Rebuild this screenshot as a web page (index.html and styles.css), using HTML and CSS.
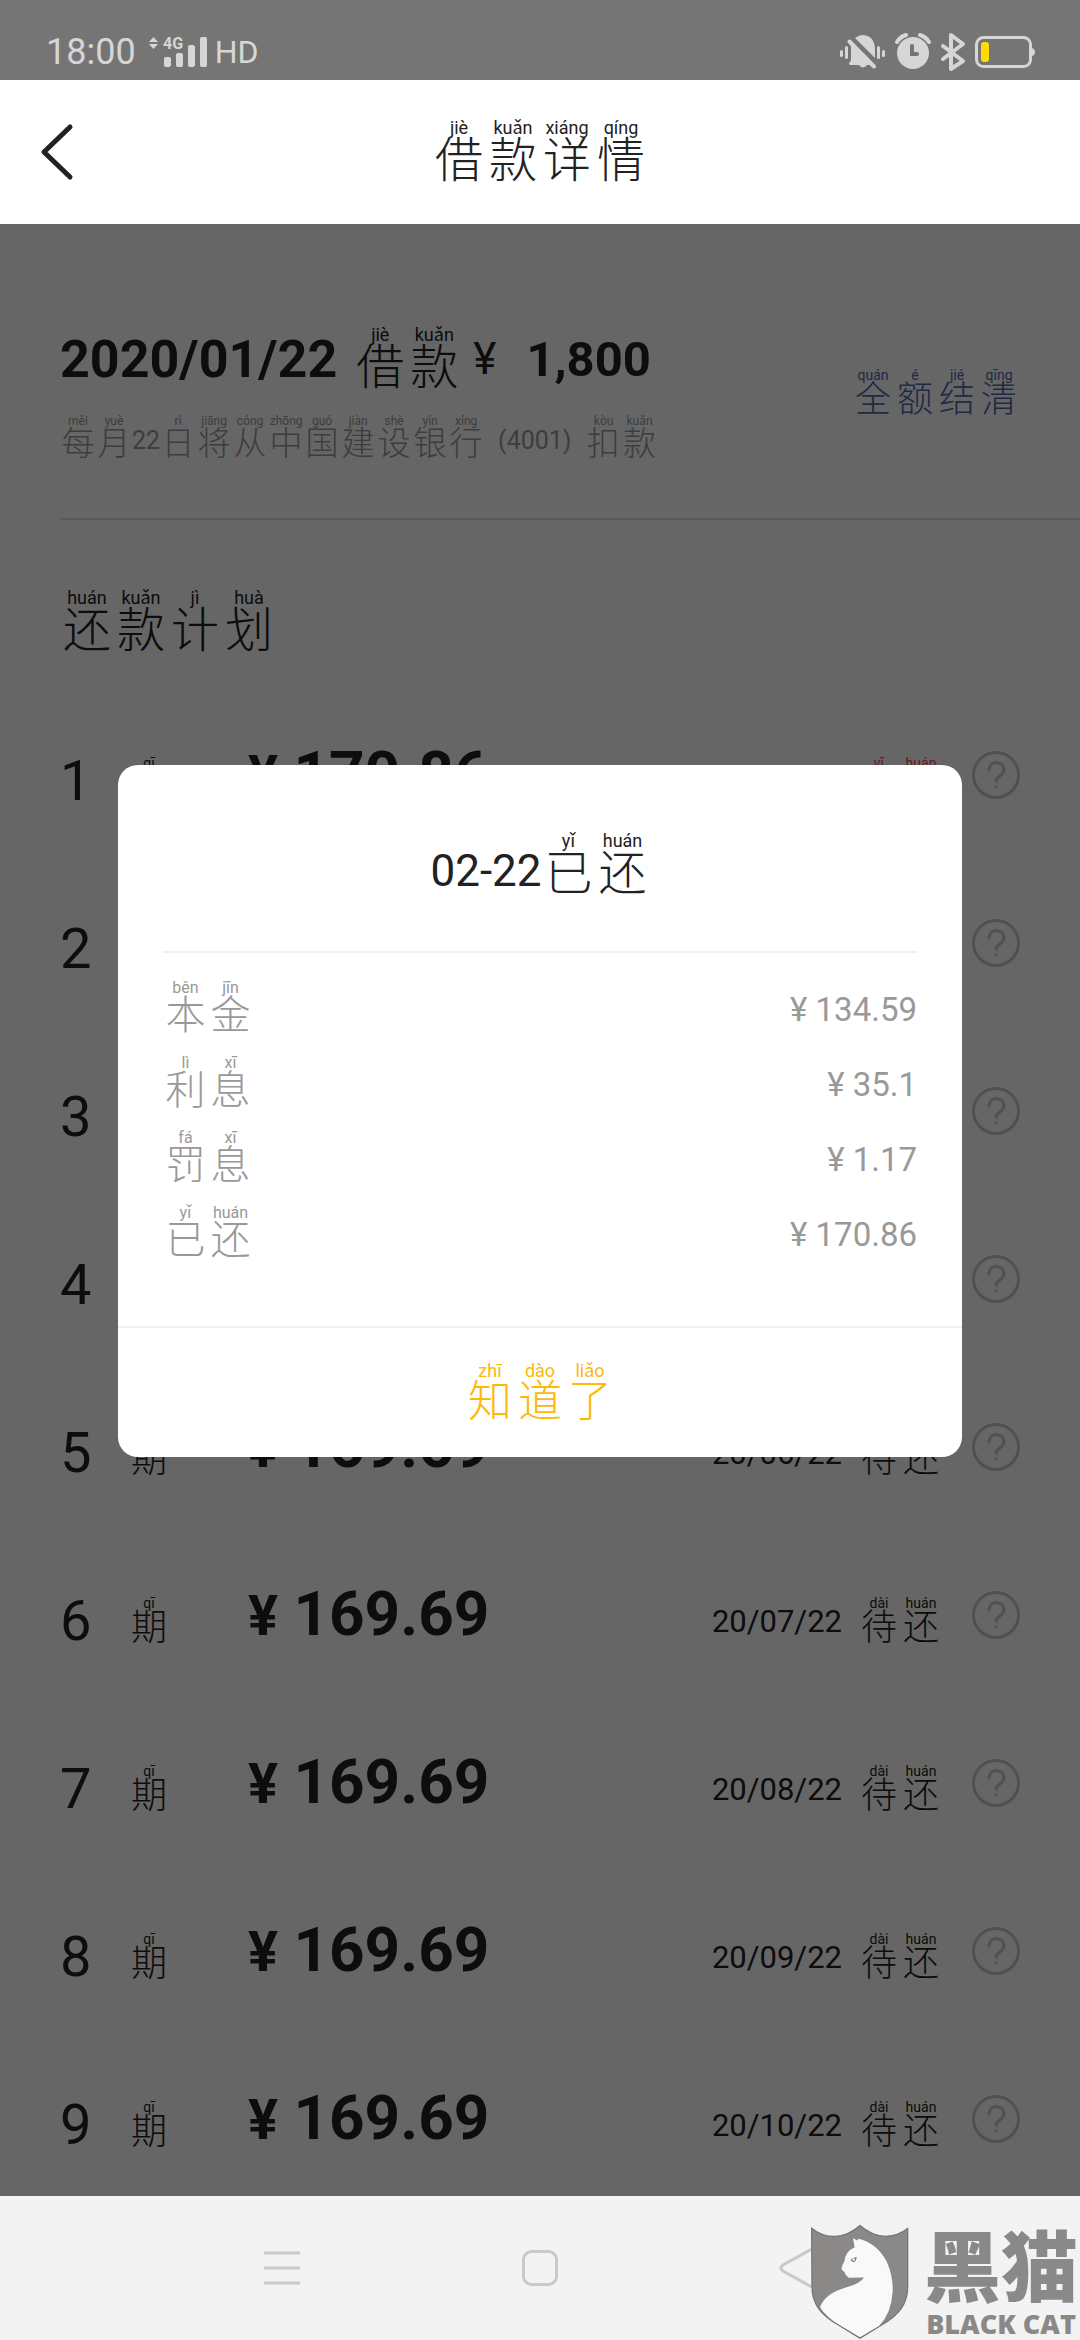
FILE: index.html
```html
<!DOCTYPE html>
<html lang="zh-CN">
<head>
    <meta charset="UTF-8">
    <meta name="viewport" content="width=device-width, initial-scale=1.0">
    <title>借款详情</title>
    <link rel="stylesheet" href="styles.css">
</head>
<body>
    <div class="status-bar">
        <div class="status-left">
            <span class="clock">18:00</span>
            <svg class="signal" width="60" height="32" viewBox="149 36 60 32">
                <path d="M149 42l4.500-5 4.500 5zM149 44h9l-4.500 5z"/>
                <text x="163" y="49">4G</text>
                <rect x="164" y="57" width="7" height="10" rx="2"/>
                <rect x="176" y="53" width="7" height="14" rx="2"/>
                <rect x="188" y="45" width="7" height="22" rx="2"/>
                <rect x="200" y="37" width="7" height="30" rx="2"/>
            </svg>
            <span class="hd">HD</span>
        </div>
        <div class="status-right">
            <svg width="46" height="38" viewBox="837 33 46 38">
                <path d="M852 38q4-3 8-3 12 1 12 15v8zM848 43l20 21q0 1-1 1h-3a4.500 4.500 0 0 1-8 0h-9q-2-1 0-3l1-2z"/>
                <path class="line" d="M846.500 41.500l24.500 25"/>
                <rect x="837" y="50" width="3" height="7" rx="1.500"/>
                <rect x="842" y="46" width="3" height="13" rx="1.500"/>
                <rect x="874" y="46" width="3" height="13" rx="1.500"/>
                <rect x="879" y="50" width="3" height="7" rx="1.500"/>
            </svg>
            <svg width="38" height="38" viewBox="894 33 38 38">
                <circle cx="913" cy="53" r="16"/>
                <path class="line" d="M897 42q3-5 9-7M929 42q-3-5-9-7"/>
                <path class="hands" d="M912 46v8h5"/>
            </svg>
            <svg width="26" height="40" viewBox="942 32 26 40">
                <path class="line" d="M945 46l20 15-12 8V35l12 9-20 15"/>
            </svg>
            <svg width="61" height="34" viewBox="974 35 61 34">
                <rect class="cell" x="976.500" y="37.500" width="54" height="29" rx="7"/>
                <path d="M1032 48q3 1 3 4t-3 4z"/>
                <rect class="charge" x="981" y="42" width="8" height="20" rx="3"/>
            </svg>
        </div>
    </div>

    <header class="top-bar">
        <button class="back" type="button" aria-label="返回">
            <svg width="34" height="58" viewBox="0 0 34 58"><path d="M30 4L4 29l26 25"/></svg>
        </button>
        <h1 class="zh-lg"><ruby>借<rt>jiè</rt></ruby><ruby>款<rt>kuǎn</rt></ruby><ruby>详<rt>xiáng</rt></ruby><ruby>情<rt>qíng</rt></ruby></h1>
    </header>

    <main>
        <section class="summary">
            <div class="summary-text">
                <h2>
                    <span class="date">2020/01/22</span>
                    <span class="zh-lg"><ruby>借<rt>jiè</rt></ruby><ruby>款<rt>kuǎn</rt></ruby></span>
                    <span class="yen">¥</span>
                    <span class="total">1,800</span>
                </h2>
                <p class="zh-xs">
                    <ruby>每<rt>měi</rt></ruby><ruby>月<rt>yuè</rt></ruby><span class="num">22</span><ruby>日<rt>rì</rt></ruby><ruby>将<rt>jiāng</rt></ruby><ruby>从<rt>cóng</rt></ruby><ruby>中<rt>zhōng</rt></ruby><ruby>国<rt>guó</rt></ruby><ruby>建<rt>jiàn</rt></ruby><ruby>设<rt>shè</rt></ruby><ruby>银<rt>yín</rt></ruby><ruby>行<rt>xíng</rt></ruby><span class="num account">(4001)</span><ruby>扣<rt>kòu</rt></ruby><ruby>款<rt>kuǎn</rt></ruby>
                </p>
            </div>
            <a class="settle zh-sm" href="#"><ruby>全<rt>quán</rt></ruby><ruby>额<rt>é</rt></ruby><ruby>结<rt>jié</rt></ruby><ruby>清<rt>qīng</rt></ruby></a>
        </section>

        <h2 class="plan-title zh-lg"><ruby>还<rt>huán</rt></ruby><ruby>款<rt>kuǎn</rt></ruby><ruby>计<rt>jì</rt></ruby><ruby>划<rt>huà</rt></ruby></h2>

        <ol class="plan">
            <li>
                <span class="no">1</span>
                <span class="zh-sm"><ruby>期<rt>qī</rt></ruby></span>
                <span class="amount"><small>¥</small> 170.86</span>
                <span class="due paid zh-sm">20/02/22 <span><ruby>已<rt>yǐ</rt></ruby><ruby>还<rt>huán</rt></ruby></span></span>
                <button class="help" type="button" aria-label="说明"><svg viewBox="0 0 48 48"><use href="#help"/></svg></button>
            </li>
            <li>
                <span class="no">2</span>
                <span class="zh-sm"><ruby>期<rt>qī</rt></ruby></span>
                <span class="amount"><small>¥</small> 169.69</span>
                <span class="due zh-sm">20/03/22 <span><ruby>待<rt>dài</rt></ruby><ruby>还<rt>huán</rt></ruby></span></span>
                <button class="help" type="button" aria-label="说明"><svg viewBox="0 0 48 48"><use href="#help"/></svg></button>
            </li>
            <li>
                <span class="no">3</span>
                <span class="zh-sm"><ruby>期<rt>qī</rt></ruby></span>
                <span class="amount"><small>¥</small> 169.69</span>
                <span class="due zh-sm">20/04/22 <span><ruby>待<rt>dài</rt></ruby><ruby>还<rt>huán</rt></ruby></span></span>
                <button class="help" type="button" aria-label="说明"><svg viewBox="0 0 48 48"><use href="#help"/></svg></button>
            </li>
            <li>
                <span class="no">4</span>
                <span class="zh-sm"><ruby>期<rt>qī</rt></ruby></span>
                <span class="amount"><small>¥</small> 169.69</span>
                <span class="due zh-sm">20/05/22 <span><ruby>待<rt>dài</rt></ruby><ruby>还<rt>huán</rt></ruby></span></span>
                <button class="help" type="button" aria-label="说明"><svg viewBox="0 0 48 48"><use href="#help"/></svg></button>
            </li>
            <li>
                <span class="no">5</span>
                <span class="zh-sm"><ruby>期<rt>qī</rt></ruby></span>
                <span class="amount"><small>¥</small> 169.69</span>
                <span class="due zh-sm">20/06/22 <span><ruby>待<rt>dài</rt></ruby><ruby>还<rt>huán</rt></ruby></span></span>
                <button class="help" type="button" aria-label="说明"><svg viewBox="0 0 48 48"><use href="#help"/></svg></button>
            </li>
            <li>
                <span class="no">6</span>
                <span class="zh-sm"><ruby>期<rt>qī</rt></ruby></span>
                <span class="amount"><small>¥</small> 169.69</span>
                <span class="due zh-sm">20/07/22 <span><ruby>待<rt>dài</rt></ruby><ruby>还<rt>huán</rt></ruby></span></span>
                <button class="help" type="button" aria-label="说明"><svg viewBox="0 0 48 48"><use href="#help"/></svg></button>
            </li>
            <li>
                <span class="no">7</span>
                <span class="zh-sm"><ruby>期<rt>qī</rt></ruby></span>
                <span class="amount"><small>¥</small> 169.69</span>
                <span class="due zh-sm">20/08/22 <span><ruby>待<rt>dài</rt></ruby><ruby>还<rt>huán</rt></ruby></span></span>
                <button class="help" type="button" aria-label="说明"><svg viewBox="0 0 48 48"><use href="#help"/></svg></button>
            </li>
            <li>
                <span class="no">8</span>
                <span class="zh-sm"><ruby>期<rt>qī</rt></ruby></span>
                <span class="amount"><small>¥</small> 169.69</span>
                <span class="due zh-sm">20/09/22 <span><ruby>待<rt>dài</rt></ruby><ruby>还<rt>huán</rt></ruby></span></span>
                <button class="help" type="button" aria-label="说明"><svg viewBox="0 0 48 48"><use href="#help"/></svg></button>
            </li>
            <li>
                <span class="no">9</span>
                <span class="zh-sm"><ruby>期<rt>qī</rt></ruby></span>
                <span class="amount"><small>¥</small> 169.69</span>
                <span class="due zh-sm">20/10/22 <span><ruby>待<rt>dài</rt></ruby><ruby>还<rt>huán</rt></ruby></span></span>
                <button class="help" type="button" aria-label="说明"><svg viewBox="0 0 48 48"><use href="#help"/></svg></button>
            </li>
        </ol>

        <div class="overlay">
            <div class="modal" role="dialog" aria-modal="true">
                <h3 class="zh-lg"><span class="day">02-22</span><ruby>已<rt>yǐ</rt></ruby><ruby>还<rt>huán</rt></ruby></h3>
                <dl class="zh-md">
                    <div><dt><ruby>本<rt>běn</rt></ruby><ruby>金<rt>jīn</rt></ruby></dt><dd>¥ 134.59</dd></div>
                    <div><dt><ruby>利<rt>lì</rt></ruby><ruby>息<rt>xī</rt></ruby></dt><dd>¥ 35.1</dd></div>
                    <div><dt><ruby>罚<rt>fá</rt></ruby><ruby>息<rt>xī</rt></ruby></dt><dd>¥ 1.17</dd></div>
                    <div><dt><ruby>已<rt>yǐ</rt></ruby><ruby>还<rt>huán</rt></ruby></dt><dd>¥ 170.86</dd></div>
                </dl>
                <button class="confirm" type="button"><ruby>知<rt>zhī</rt></ruby><ruby>道<rt>dào</rt></ruby><ruby>了<rt>liǎo</rt></ruby></button>
            </div>
        </div>
    </main>

    <nav class="nav-bar">
        <button type="button" aria-label="菜单"><svg width="40" height="40" viewBox="0 0 40 40"><path d="M2 5h36M2 20h36M2 35h36"/></svg></button>
        <button type="button" aria-label="主页"><svg width="40" height="40" viewBox="0 0 40 40"><rect x="3.500" y="3.500" width="33" height="33" rx="8"/></svg></button>
        <button type="button" aria-label="返回"><svg width="40" height="40" viewBox="0 0 40 40"><path d="M32 2L5 17q-4 3 0 6l27 15q4 1 5-3V5q-1-4-5-3z"/></svg></button>
        <div class="watermark">
            <svg width="100" height="117" viewBox="90 130 300 350">
                <path class="shield" d="M95 145Q125 170 165 170Q205 168 240 137Q275 168 317 170Q355 168 383 146V320C383 370 360 405 300 438L240 475L180 438C120 405 96 370 96 320Z"/>
                <path class="cat" d="M219 175L232 182L236 177Q290 190 320 245Q340 290 338 335Q334 400 298 438L240 472L180 436Q140 414 120 382Q135 340 200 322Q240 312 252 293L207 294Q195 285 194 277L184 268Q186 255 193 245Q195 215 224 202Z"/>
                <path class="eye" d="M212 240q6-9 18-8-1 12-9 15-7-1-9-7z"/>
                <circle class="cat" cx="221" cy="239" r="4"/>
            </svg>
            <div class="brand"><b>黑猫</b><span>BLACK CAT</span></div>
        </div>
    </nav>

    <svg class="sprite">
        <symbol id="help" viewBox="0 0 48 48">
            <circle cx="24" cy="24" r="22.500"/>
            <path d="M17 19c0-10 15-10 15 0 0 5-8 7-8 11M24 36v.1"/>
        </symbol>
    </svg>
</body>
</html>
```
FILE: styles.css
```css
* {
    box-sizing: border-box;
}
body {
    margin: 0;
    height: 100vh;
    display: flex;
    flex-direction: column;
    overflow: hidden;
    background: #fff;
    color: #222;
    font-family: Roboto, "Noto Sans CJK SC", sans-serif;
}
h1, h2, h3, p, ol, dl, dd {
    margin: 0;
    padding: 0;
    font-weight: 400;
}
button {
    padding: 0;
    border: 0;
    background: none;
    font-family: inherit;
}
svg {
    display: block;
}
.sprite {
    position: absolute;
    width: 0;
    height: 0;
}

/* characters with pinyin on top */
ruby {
    display: inline-flex;
    flex-direction: column-reverse;
    align-items: center;
    width: var(--cell);
    line-height: 1;
    font-weight: 300;
}
rt {
    display: block;
    font-size: var(--pinyin);
    line-height: 1;
    white-space: nowrap;
    font-weight: 400;
}
.zh-lg { --cell: 54px; --pinyin: 18px; font-size: 48px; }
.zh-md { --cell: 45px; --pinyin: 16px; font-size: 40px; }
.zh-sm { --cell: 42px; --pinyin: 14px; font-size: 36px; }
.zh-xs { --cell: 36px; --pinyin: 12px; font-size: 33px; }

.status-bar {
    display: flex;
    justify-content: space-between;
    align-items: center;
    height: 80px;
    padding: 24px 45px 0 46px;
    background: #757575;
    color: #d6d6d6;
}
.status-left, .status-right {
    display: flex;
    align-items: center;
}
.status-right {
    gap: 8px;
}
.clock {
    font-size: 36px;
}
.signal {
    margin: 0 6px 0 13px;
    overflow: visible;
}
.signal text {
    font-size: 16px;
    font-weight: 700;
}
.hd {
    font-size: 32px;
}
.status-bar svg {
    fill: #d6d6d6;
}
.status-bar .line {
    fill: none;
    stroke: #d6d6d6;
    stroke-width: 4;
    stroke-linecap: round;
    stroke-linejoin: round;
}
.status-bar .hands {
    fill: none;
    stroke: #757575;
    stroke-width: 4;
    stroke-linecap: round;
}
.status-bar .cell {
    fill: none;
    stroke: #d6d6d6;
    stroke-width: 3;
}
.status-bar .charge {
    fill: #ffdc00;
}

.top-bar {
    display: grid;
    grid-template-columns: 1fr auto 1fr;
    align-items: center;
    height: 144px;
    padding: 0 40px;
}
.top-bar h1, .plan-title {
    display: flex;
}
.back {
    justify-self: start;
}
.back path {
    fill: none;
    stroke: #222;
    stroke-width: 5;
    stroke-linecap: round;
    stroke-linejoin: round;
}

main {
    position: relative;
    flex: 1;
    min-height: 0;
    overflow: hidden;
}
.summary {
    display: flex;
    justify-content: space-between;
    align-items: center;
    margin-left: 60px;
    padding: 102px 60px 58px 0;
    border-bottom: 2px solid #e1e1eb;
}
.summary h2 {
    display: flex;
    align-items: center;
    height: 66px;
}
.summary h2 > * {
    display: flex;
}
.date {
    margin-right: 16px;
    font-size: 52px;
    font-weight: 700;
}
.yen {
    margin: 0 30px 0 12px;
    font-size: 44px;
}
.total {
    font-size: 49px;
    font-weight: 700;
}
.summary p {
    display: flex;
    align-items: center;
    margin-top: 23px;
    color: #999;
}
.num {
    padding-top: 6px;
    font-size: 25px;
}
.account {
    margin: 0 14px;
}
.settle {
    display: flex;
    color: #4e69aa;
    text-decoration: none;
}
.plan-title {
    padding: 69px 60px 36px;
}

.plan {
    list-style: none;
}
.plan li {
    display: grid;
    grid-template-columns: 68px 120px 1fr auto 78px;
    align-items: center;
    height: 168px;
    padding: 12px 60px 0;
}
.plan li > .zh-sm {
    display: flex;
}
.no {
    font-size: 56px;
}
.amount {
    margin-bottom: 16px;
    font-size: 62px;
    font-weight: 700;
}
.amount small {
    font-size: 56px;
}
.plan .due {
    align-items: center;
    gap: 16px;
    font-size: 31px;
}
.due span {
    display: flex;
    font-size: 36px;
}
.paid {
    color: #ff4444;
}
.help {
    justify-self: end;
    width: 48px;
    height: 48px;
    margin-bottom: 12px;
    fill: none;
    stroke: #c8c8c8;
    stroke-width: 3;
    stroke-linecap: round;
}

.overlay {
    position: absolute;
    inset: 0;
    display: flex;
    align-items: center;
    padding: 0 118px 198px;
    background: rgba(0, 0, 0, 0.6);
}
.modal {
    flex: 1;
    border-radius: 20px;
    background: #fff;
}
.modal h3 {
    display: flex;
    justify-content: center;
    align-items: center;
    margin: 0 45px;
    padding: 67px 0 53px;
    border-bottom: 2px solid #f1f1f1;
}
.day {
    padding-top: 12px;
    font-size: 44px;
}
.modal dl {
    padding: 17px 45px 56px;
    color: #999;
}
.modal dl div {
    display: flex;
    justify-content: space-between;
    align-items: center;
    height: 75px;
}
.modal dt {
    display: flex;
}
.modal dd {
    padding-top: 4px;
    font-size: 33px;
}
.confirm {
    --cell: 50px;
    --pinyin: 18px;
    display: flex;
    justify-content: center;
    align-items: center;
    width: 100%;
    height: 131px;
    border-top: 2px solid #f1f1f1;
    color: #fcb90a;
    font-size: 44px;
}

.nav-bar {
    position: relative;
    display: flex;
    justify-content: center;
    align-items: center;
    gap: 218px;
    height: 144px;
    background: #f3f3f3;
}
.nav-bar button svg {
    fill: none;
    stroke: #c9c9c9;
    stroke-width: 3;
}
.watermark {
    position: absolute;
    right: 2px;
    bottom: 0;
    display: flex;
    align-items: flex-end;
    gap: 14px;
    color: #8b8888;
}
.shield {
    fill: #8b8888;
    stroke: #777;
    stroke-width: 4;
}
.cat {
    fill: #f9f9f9;
}
.eye {
    fill: #777;
}
.brand {
    display: flex;
    flex-direction: column;
    align-items: center;
}
.brand b {
    font-size: 77px;
    font-weight: 900;
    line-height: 76px;
}
.brand span {
    font-family: "Open Sans", sans-serif;
    font-size: 27px;
    font-weight: 800;
    line-height: 32px;
}
```
